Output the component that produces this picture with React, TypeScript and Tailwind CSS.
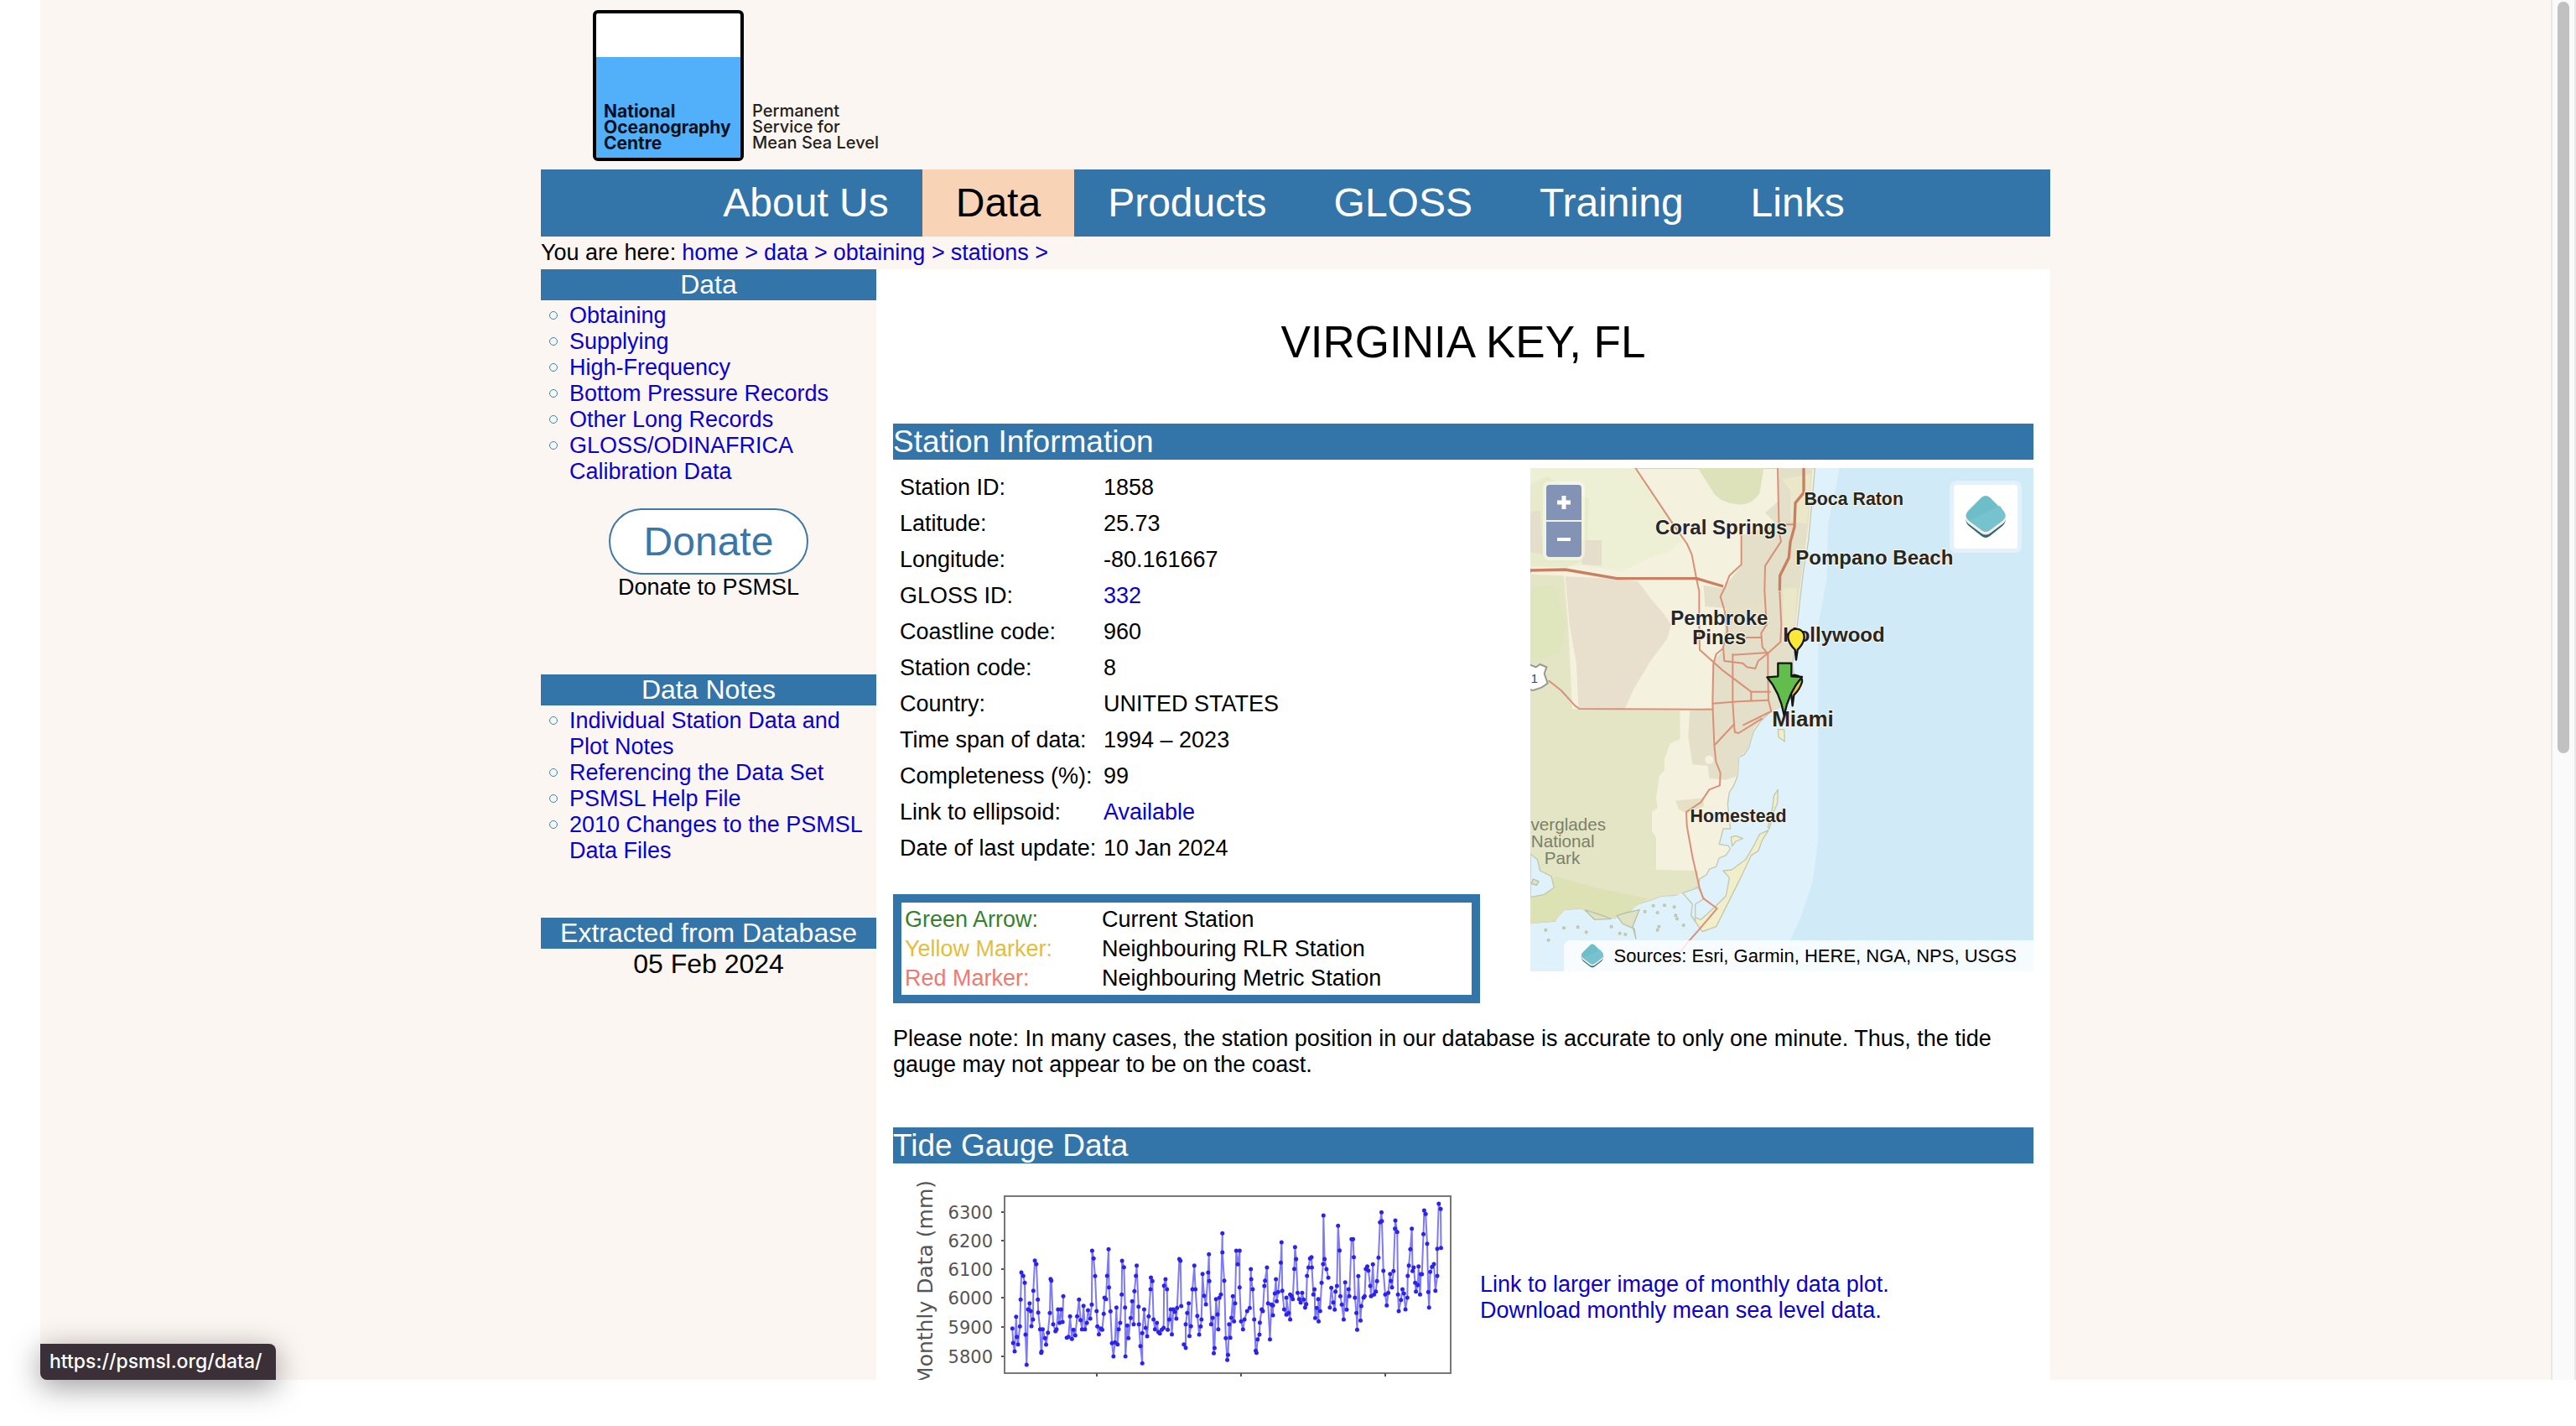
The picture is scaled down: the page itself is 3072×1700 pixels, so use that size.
import type { ReactNode } from "react";

const NAV = ["About Us", "Data", "Products", "GLOSS", "Training", "Links"];
const CRUMBS = ["home >", "data >", "obtaining >", "stations >"];
const DATA_LINKS = [
  "Obtaining",
  "Supplying",
  "High-Frequency",
  "Bottom Pressure Records",
  "Other Long Records",
  "GLOSS/ODINAFRICA Calibration Data",
];
const NOTE_LINKS = [
  "Individual Station Data and Plot Notes",
  "Referencing the Data Set",
  "PSMSL Help File",
  "2010 Changes to the PSMSL Data Files",
];
const INFO: { label: string; value: string; link?: boolean }[] = [
  { label: "Station ID:", value: "1858" },
  { label: "Latitude:", value: "25.73" },
  { label: "Longitude:", value: "-80.161667" },
  { label: "GLOSS ID:", value: "332", link: true },
  { label: "Coastline code:", value: "960" },
  { label: "Station code:", value: "8" },
  { label: "Country:", value: "UNITED STATES" },
  { label: "Time span of data:", value: "1994 – 2023" },
  { label: "Completeness (%):", value: "99" },
  { label: "Link to ellipsoid:", value: "Available", link: true },
  { label: "Date of last update:", value: "10 Jan 2024" },
];
const LEGEND = [
  { label: "Green Arrow:", value: "Current Station", color: "text-[#38802a]" },
  { label: "Yellow Marker:", value: "Neighbouring RLR Station", color: "text-[#e5bd3c]" },
  { label: "Red Marker:", value: "Neighbouring Metric Station", color: "text-[#ee7a70]" },
];

// Monthly readings, one string per unbroken run of months.
const SERIES = [
  "330,605 332,657 336,687 340,563 342,635 345,662 350,598 352,502 354,405 359,417 363,442 365,627 368,735 372,537 376,515 379,543 381,597 385,573 386,470 390,362 394,375 398,502 399,548 404,608 407,692 408,688 411,608 417,640 420,663 425,620 430,550 432,428 434,434 439,590 445,615 448,608 452,537 456,585 460,537 464,582 466,490",
  "475,638 480,635 484,562 489,643 493,610 498,630 503,562 508,502 512,575 516,608 520,524 524,608 529,585 532,540 538,570 542,520 543,327 547,355 551,418 555,543 557,598 561,626 566,605 570,610 574,553 576,495 580,500 583,417 587,322 588,458 592,544 596,658 600,705 604,655 608,530 611,662 614,608 618,585 622,484 623,363 628,386 631,530 632,705 637,595 640,640 646,568 650,508 654,590 656,472 660,417 662,380 667,527 668,590 672,668 677,730 677,622 682,537 686,603 690,633 694,562 699,465 700,423 704,436 707,573 711,608 716,585 720,618 724,623 729,610 734,603 735,452 739,429 743,465 745,610 749,573 753,537 756,626 760,537 764,545 768,570 770,532 776,357 779,363 781,525",
  "788,662 793,674 793,590 797,550 801,515 803,632 807,597 811,465 816,380 819,465 824,560 829,627 833,598 835,573 838,410 842,488 847,519 853,405 855,340 856,436 861,590 865,567 868,694 870,675 874,500 878,555 880,608 883,495 887,484 891,265 891,333 896,434 900,640 904,718 906,700 909,590 912,638 915,567 919,490 922,580 925,515 928,327 932,376 937,327 937,458 941,580 946,608 950,573 957,543 964,532 967,393 968,429 972,465 976,573 980,685 982,692 985,644 990,627 991,584 996,537 999,543 1003,453 1005,434 1010,387 1013,515 1018,644 1022,520 1026,558 1026,523 1031,480 1034,429 1036,508 1040,475 1047,370 1049,297 1051,470 1056,537 1062,556 1062,495 1068,550 1072,573 1072,484 1076,490 1079,500 1083,392 1085,314 1088,357 1092,478 1096,500 1100,512 1104,478 1108,502 1112,530 1115,518 1117,417 1121,387 1125,355 1129,350 1130,387 1134,484 1137,465 1139,568 1143,532 1148,580 1147,500 1152,543 1156,442 1160,375 1161,201 1164,357 1169,393 1174,424",
  "1178,530 1182,460 1187,512 1191,538 1193,473 1197,453 1200,238 1204,326 1206,490 1210,520 1215,573 1219,440 1223,538 1228,465 1230,490 1236,286 1240,286 1242,350 1245,495 1249,550 1251,610 1254,418 1260,577 1262,525 1268,495 1271,490 1274,392 1278,383 1281,398 1286,453 1288,490 1293,376 1296,484 1301,473 1304,436 1308,352 1312,226 1316,190 1317,221 1321,399 1326,484 1330,523 1334,478 1339,410 1341,435 1344,458 1348,400 1352,248 1353,219 1358,260 1360,484 1362,543 1368,503 1372,465 1376,480 1380,537 1385,495 1386,417 1389,380 1393,322 1397,248 1399,400 1402,387 1406,442 1408,473 1413,450 1415,383 1419,484 1421,411 1424,411 1428,268 1430,183 1434,196 1438,302 1441,475 1443,530 1446,403 1451,385 1456,375 1460,470 1465,417 1465,320 1469,159 1474,178 1475,317",
].map((run) =>
  run.split(" ").map((pair) => {
    const [x, y] = pair.split(",").map(Number);
    return { x: x / 2.24 - 5, y: y / 3 - 5 };
  }),
);

const Y_TICKS = [
  { y: 58, label: "6300" },
  { y: 92, label: "6200" },
  { y: 126, label: "6100" },
  { y: 160, label: "6000" },
  { y: 195, label: "5900" },
  { y: 230, label: "5800" },
];

function Link({ children, className = "" }: { children: ReactNode; className?: string }) {
  return (
    <a href="#" className={`text-[#0a00cf] ${className}`}>
      {children}
    </a>
  );
}

function Logo() {
  return (
    <a href="#" className="ml-[62px] flex w-max items-end gap-[10px] pt-3 font-[Inter,sans-serif] leading-[19px]">
      <span className="flex h-[180px] w-[180px] flex-col overflow-hidden rounded-md border-4 border-black bg-white text-[21px]">
        <span className="h-[52px]" />
        <span className="flex flex-1 flex-col justify-end bg-[#51b0f9] pb-2 pl-[9px] font-bold text-[#05101c]">
          <span>National</span>
          <span>Oceanography</span>
          <span>Centre</span>
        </span>
      </span>
      <span className="flex flex-col pb-3 text-[20px] font-medium text-[#222]">
        <span>Permanent</span>
        <span>Service for</span>
        <span>Mean Sea Level</span>
      </span>
    </a>
  );
}

function SideHeading({ children }: { children: ReactNode }) {
  return <h2 className="bg-[#3475a9] text-center text-[32px] leading-[37px] text-white">{children}</h2>;
}

function SideList({ items }: { items: string[] }) {
  return (
    <ul className="pt-[3px]">
      {items.map((item) => (
        <li key={item} className="flex pl-[10px]">
          <span className="mt-[10px] mr-[14px] h-[10px] w-[10px] shrink-0 rounded-full border border-[#4d7f90] bg-[#eefaff]" />
          <Link>{item}</Link>
        </li>
      ))}
    </ul>
  );
}

function MainHeading({ children }: { children: ReactNode }) {
  return <h2 className="bg-[#3475a9] text-[37px] leading-[43px] text-white">{children}</h2>;
}

function LayersIcon({ className }: { className: string }) {
  return (
    <svg viewBox="0 0 50 52" className={className} aria-hidden="true">
      <path d="M1 27 Q1 34 5 37 L20 49 Q25 53 30 49 L45 37 Q49 34 49 27Z" fill="#36647a" />
      <path d="M1 25 Q0 31 4 34 L20 46 Q25 49 30 46 L46 34 Q50 31 49 25Z" fill="#f1eee4" />
      <path d="M4 19 L20 3 Q25 -1 30 3 L46 19 Q51 25 46 30 L30 42 Q25 46 20 42 L4 30 Q-1 25 4 19Z" fill="#6ebeca" />
      <path d="M6 30 L42 13 L46 19 Q51 25 46 30 L30 42 Q25 46 20 42Z" fill="#76c3cf" />
    </svg>
  );
}

const COAST =
  "L1018 0 L1005 150 L995 260 L978 360 L966 460 L955 560 L945 640 L938 700 L945 760 L925 800 L900 850 L860 870 L825 905 L800 940 L790 970 L782 1000 L765 1025 L746 1035 L744 1060 L742 1100 L728 1135 L712 1160 L706 1200 L712 1260 L716 1290 L690 1290 L676 1345 L708 1350 L715 1362 L700 1385 L675 1395 L665 1425 L640 1435 L630 1455 L605 1470 L600 1495 L560 1505 L520 1528 L470 1530 L430 1545 L380 1560 L360 1580 L325 1598 L300 1610 L270 1600 L230 1595 L210 1580 L170 1575 L120 1580 L98 1605 L88 1620 L0 1628 Z";

function MapDrawing() {
  return (
    <svg viewBox="0 0 1800 1800" className="h-full w-full" role="img" aria-label="Map of the station and its neighbours">
      <rect width="1800" height="1800" fill="#d0eaf7" />
      <path d="M900 0 H1106 L1090 90 L1065 200 L1060 400 L1030 560 L1030 1330 L1010 1480 L970 1600 L930 1690 L905 1800 L0 1800 L0 1500 L700 1000Z" fill="#dff1fb" />
      <path d={`M0 0 ${COAST}`} fill="#f4f2de" stroke="#c3c9b4" strokeWidth="4" />
      <g stroke="none">
        <path d="M0 0 H370 L420 70 L500 190 L540 260 L500 300 L430 320 L330 370 L200 350 L120 350 L0 360Z" fill="#eef0d6" />
        <path d="M0 60 L60 30 L210 110 L200 330 L130 355 L0 350Z" fill="#e7ebcb" />
        <path d="M0 160 L35 150 L45 310 L0 300Z M185 258 H255 V350 L185 345Z" fill="#e4decb" />
        <path d="M600 0 H835 L820 90 Q790 135 740 130 Q670 120 650 80Z" fill="#dde2bb" />
        <path d="M0 380 L120 385 L135 560 L150 862 L535 868 L536 970 L500 985 L480 1040 L480 1080 L462 1100 L450 1180 L455 1215 L435 1230 L435 1300 L450 1320 L450 1437 L600 1440 L600 1495 L520 1528 L470 1530 L430 1545 L380 1560 L325 1598 L300 1610 L230 1595 L170 1575 L120 1580 L88 1620 L0 1628Z" fill="#e3e5c5" />
        <path d="M0 430 L80 420 L130 560 L100 660 L0 700Z" fill="#dfe5bd" />
        <path d="M0 1530 L90 1460 L230 1500 L420 1540 L360 1580 L300 1610 L170 1575 L120 1580 L88 1620 L0 1628Z" fill="#dde2b5" />
        <path d="M125 388 L300 395 L385 405 L425 460 L480 525 L503 560 L490 610 L430 690 L370 790 L338 860 L172 860 L165 700 L140 560Z" fill="#e8dfcc" />
        <path d="M890 0 H1010 L995 200 L975 350 L955 500 L940 640 L930 760 L890 860 L850 875 L800 930 L780 1000 L745 1040 L742 1100 L700 1115 L640 1110 L635 1065 L580 1060 L565 960 L570 868 L650 862 L650 700 L690 650 L700 500 L625 495 L620 420 L690 430 L755 350 L758 240 L880 200 L840 160 L885 120Z" fill="#e3dfc8" />
        <path d="M520 1190 L620 1180 L620 1210 L560 1235 L530 1220Z M810 480 L850 490 L840 560 L720 560 L710 500Z" fill="#e6e0c6" />
        <path d="M900 40 L1005 20 L990 200 L930 190 L930 80Z M905 430 L955 430 L945 560 L900 600Z" fill="#edebc9" opacity=".7" />
        <circle cx="640" cy="1043" r="15" fill="#f4f2de" />
      </g>
      <g fill="#f0eecb" stroke="#c3c9a8" strokeWidth="4" strokeLinejoin="round">
        <path d="M886 935 L908 935 L910 978 L888 962Z" />
        <path d="M886 1150 L884 1200 L872 1225 L855 1290 L850 1285 L866 1215 L872 1170Z" />
        <path d="M852 1295 L830 1330 L815 1370 L790 1385 L755 1460 L700 1570 L665 1640 L615 1658 L575 1600 L610 1615 L660 1570 L700 1530 L712 1465 L690 1440 L720 1437 L770 1400 L800 1350 L820 1310Z" />
        <path d="M718 1320 L735 1315 L760 1325 L735 1335 L722 1352Z" />
      </g>
      <g fill="#dff1fb" stroke="#c3c9a8" strokeWidth="4">
        <path d="M0 1380 L25 1400 L35 1440 L75 1460 L85 1500 L50 1525 L0 1535Z" />
        <path d="M545 1520 L600 1500 L622 1540 L590 1560 L590 1620 L575 1600 L580 1560Z" />
      </g>
      <g fill="#dfe2c4" stroke="#b9c1a2" strokeWidth="4">
        <path d="M310 1600 L330 1630 L372 1648 L378 1685 L366 1640 L390 1580 L345 1590Z" />
        <path d="M195 1580 L230 1615 L290 1612 L250 1598Z" />
        <path d="M10 1470 l20 8 l-8 14 l-18 -6Z" />
        {[[120,1645],[55,1652],[65,1688],[170,1642],[290,1640],[320,1664],[340,1668],[410,1586],[440,1565],[455,1590],[460,1640],[455,1652],[520,1600],[525,1612],[548,1635],[480,1564],[515,1570],[200,1660]].map(([x, y]) => (
          <circle key={`${x}-${y}`} cx={x} cy={y} r="4" />
        ))}
      </g>
      <g fill="none" stroke="#da9078" strokeWidth="6" strokeLinejoin="round">
        <path d="M376 0 L450 110 L510 200 L560 270 L578 310 L595 400 L604 440 L604 560 L606 650 L690 725 L790 800 H860" />
        <path d="M755 235 V345 L712 385 L697 425 L680 460 L695 510 L705 580 L690 640 L694 690 L760 698 L775 712 L805 717 L815 690 L850 662 L895 622 L898 560 L892 440" />
        <path d="M885 0 L890 230 L897 262 L840 350 L838 440 L845 560 L826 590 L830 640 L850 665 L850 750 L852 830 L862 870 L760 920" />
        <path d="M724 668 L850 660 M724 664 V840 L730 930 L732 945 L745 948 L830 895" />
        <path d="M690 645 L665 665 L655 700 L652 840 L658 990 L664 1050 L680 1090 L678 1135 L640 1150 L610 1195 L558 1230 L560 1280 L580 1390 L605 1500 L618 1538 L668 1575 L600 1655 L560 1700 L500 1780" />
        <path d="M652 842 L745 835 L853 830 M790 800 V832 M660 990 L730 915 M770 606 H825 M895 202 H945" />
        <path d="M65 760 L110 795 L160 850 L175 861 L655 863" />
      </g>
      <g fill="none" stroke="#cb7f62" strokeWidth="10" strokeLinejoin="round">
        <path d="M978 0 V88 L948 125 L945 210 L930 265 L925 320 L893 385 L892 438" />
        <path d="M0 366 L125 363 L310 395 H595 L690 423" />
      </g>
      <path d="M-10 700 L20 712 L35 702 L58 712 L50 735 L62 770 L40 785 L10 795 L-10 790Z" fill="#fff" stroke="#9a9a90" strokeWidth="6" />
      <text x="2" y="768" fontSize="44" fill="#444" fontFamily="Liberation Sans, sans-serif">1</text>
      <g fontFamily="Liberation Sans, sans-serif" fontWeight="bold" fill="#262626" textAnchor="middle" stroke="#f6f4e6" strokeWidth="6" paintOrder="stroke">
        <text x="1157" y="132" fontSize="64">Boca Raton</text>
        <text x="683" y="237" fontSize="72">Coral Springs</text>
        <text x="1231" y="345" fontSize="72">Pompano Beach</text>
        <text x="676" y="560" fontSize="72">Pembroke</text>
        <text x="676" y="631" fontSize="72">Pines</text>
        <text x="1086" y="620" fontSize="72">Hollywood</text>
        <text x="975" y="924" fontSize="78">Miami</text>
        <text x="744" y="1266" fontSize="64">Homestead</text>
      </g>
      <g fontFamily="Liberation Sans, sans-serif" fill="#7b8069" textAnchor="middle" fontSize="62">
        <text x="136" y="1297">verglades</text>
        <text x="116" y="1357">National</text>
        <text x="114" y="1417">Park</text>
      </g>
      <g stroke="#151515" strokeWidth="7" strokeLinejoin="round">
        <path d="M938 850 L934 812 L925 780 Q915 745 945 740 Q975 745 972 765 Q965 790 943 812Z" fill="#e6c93a" />
        <path d="M951 686 L947 650 Q922 625 922 603 Q924 577 951 575 Q978 577 980 603 Q980 625 956 650Z" fill="#fbe83b" />
        <path d="M886 698 H934 V745 L972 747 Q925 800 908 884 Q892 800 847 748 L886 745Z" fill="#62bd4c" />
      </g>
    </svg>
  );
}

function StationMap() {
  return (
    <div className="relative h-[600px] w-[600px] shrink-0 overflow-hidden">
      <MapDrawing />
      <div className="absolute top-4 left-[15px] flex flex-col gap-[2px] rounded-lg bg-white/40 p-1">
        <button aria-label="Zoom in" className="flex h-[42px] w-[42px] items-center justify-center rounded-t bg-[#8293b6]">
          <svg viewBox="0 0 16 16" className="h-4 w-4" aria-hidden="true">
            <path d="M0 8H16M8 0V16" stroke="#fff" strokeWidth="5" />
          </svg>
        </button>
        <button aria-label="Zoom out" className="flex h-[42px] w-[42px] items-center justify-center rounded-b bg-[#8293b6]">
          <svg viewBox="0 0 16 16" className="h-4 w-4" aria-hidden="true">
            <path d="M0 8H16" stroke="#fff" strokeWidth="4" />
          </svg>
        </button>
      </div>
      <div className="absolute top-[15px] right-[14px] rounded-lg bg-white/40 p-[5px]">
        <button aria-label="Layers" className="flex h-[76px] w-[76px] items-center justify-center rounded bg-white">
          <LayersIcon className="h-[52px] w-[50px]" />
        </button>
      </div>
      <div className="absolute right-0 bottom-0 flex h-[37px] items-center gap-3 rounded-tl-lg bg-white/80 pr-5 pl-5 text-[22px] leading-[31px]">
        <LayersIcon className="h-[29px] w-[28px]" />
        <span className="whitespace-nowrap">Sources: Esri, Garmin, HERE, NGA, NPS, USGS</span>
      </div>
    </div>
  );
}

function MonthlyChart() {
  return (
    <svg viewBox="0 0 700 320" className="h-[320px] w-[700px] shrink-0" role="img" aria-label="Monthly data plot">
      <g fontFamily="DejaVu Sans, sans-serif" fill="#555">
        <text transform="translate(47 20) rotate(-90)" textAnchor="end" fontSize="25">
          Monthly Data (mm)
        </text>
        {Y_TICKS.map((tick) => (
          <g key={tick.label}>
            <text x="119" y={tick.y + 8} textAnchor="end" fontSize="21">
              {tick.label}
            </text>
            <path d={`M129 ${tick.y}H133`} stroke="#555" strokeWidth="2" />
          </g>
        ))}
      </g>
      <rect x="133" y="39" width="532" height="211" fill="none" stroke="#777" strokeWidth="2" />
      <path d="M243 250V254M415 250V254M587 250V254" stroke="#555" strokeWidth="2" />
      {SERIES.map((run, i) => (
        <g key={i}>
          <polyline points={run.map((p) => `${p.x},${p.y}`).join(" ")} fill="none" stroke="#7f7af6" strokeWidth="2" />
          {run.map((p, j) => (
            <circle key={j} cx={p.x} cy={p.y} r="2.5" fill="#2b22ee" />
          ))}
        </g>
      ))}
    </svg>
  );
}

export default function App() {
  return (
    <div className="flex h-screen flex-col overflow-hidden bg-white font-['Liberation_Sans',Arial,sans-serif] text-[27px] leading-[31px] text-black">
      <div className="flex min-h-0 flex-1">
        <div className="ml-12 min-w-0 flex-1 overflow-hidden bg-[#fcf6f2]">
          <div className="mx-auto max-w-[1800px]">
            <header>
              <Logo />
              <nav className="mt-[10px] flex justify-center bg-[#3475a9] pr-7 text-[48px] leading-[80px]">
                {NAV.map((item) => (
                  <a
                    key={item}
                    href="#"
                    className={item === "Data" ? "bg-[#f9d3b5] px-10 text-black" : "px-10 text-white"}
                  >
                    {item}
                  </a>
                ))}
              </nav>
              <div className="flex gap-[7px] pt-1 pb-1">
                <span>You are here:</span>
                {CRUMBS.map((crumb) => (
                  <Link key={crumb}>{crumb}</Link>
                ))}
              </div>
            </header>
            <div className="flex">
              <aside className="w-[400px] shrink-0">
                <SideHeading>Data</SideHeading>
                <SideList items={DATA_LINKS} />
                <div className="mt-7 flex flex-col items-center">
                  <button className="h-[79px] w-[238px] rounded-full border-2 border-[#3f77a6] bg-white text-[48px] leading-[55px] text-[#3a76a8]">
                    Donate
                  </button>
                  <span>Donate to PSMSL</span>
                </div>
                <div className="mt-[88px]">
                  <SideHeading>Data Notes</SideHeading>
                  <SideList items={NOTE_LINKS} />
                </div>
                <div className="mt-16">
                  <SideHeading>Extracted from Database</SideHeading>
                  <p className="text-center text-[32px] leading-[37px]">05 Feb 2024</p>
                </div>
              </aside>
              <main className="min-w-0 flex-1 bg-white px-5 pt-14">
                <h1 className="mb-[67px] text-center text-[53px] leading-[61px]">VIRGINIA KEY, FL</h1>
                <MainHeading>Station Information</MainHeading>
                <div className="flex justify-between pt-[10px]">
                  <div className="pt-[2px]">
                    <table>
                      <tbody>
                        {INFO.map((row) => (
                          <tr key={row.label}>
                            <th scope="row" className="h-[43px] w-[251px] pl-2 text-left font-normal whitespace-nowrap">
                              {row.label}
                            </th>
                            <td className="whitespace-nowrap">{row.link ? <Link>{row.value}</Link> : row.value}</td>
                          </tr>
                        ))}
                      </tbody>
                    </table>
                    <div className="mt-[33px] w-[700px] border-10 border-[#3475a9] px-1 pt-[3px] pb-[2px]">
                      <table>
                        <tbody>
                          {LEGEND.map((row) => (
                            <tr key={row.label}>
                              <th scope="row" className={`h-[35px] w-[235px] text-left font-normal ${row.color}`}>
                                {row.label}
                              </th>
                              <td>{row.value}</td>
                            </tr>
                          ))}
                        </tbody>
                      </table>
                    </div>
                  </div>
                  <StationMap />
                </div>
                <p className="mt-[27px] mb-[59px]">
                  Please note: In many cases, the station position in our database is accurate to only one minute. Thus, the tide
                  gauge may not appear to be on the coast.
                </p>
                <MainHeading>Tide Gauge Data</MainHeading>
                <div className="flex items-center">
                  <MonthlyChart />
                  <div className="flex flex-col">
                    <Link>Link to larger image of monthly data plot.</Link>
                    <Link>Download monthly mean sea level data.</Link>
                  </div>
                </div>
              </main>
            </div>
          </div>
        </div>
        <div className="flex w-[30px] shrink-0 border-x-2 border-[#e8e8e8] bg-[#fafafa] px-[6px] pt-[2px]">
          <div className="h-[896px] w-4 rounded-full bg-[#c1c1c1]" />
        </div>
      </div>
      <footer className="relative h-[55px] shrink-0 bg-white">
        <div className="absolute bottom-full left-12 flex h-[43px] items-center rounded-tr-lg rounded-bl-lg bg-[#3b2f38] pr-4 pl-[11px] font-[Inter,sans-serif] text-[23px] font-medium text-white shadow-[0_8px_36px_rgba(0,0,0,0.4)]">
          https://psmsl.org/data/
        </div>
      </footer>
    </div>
  );
}
